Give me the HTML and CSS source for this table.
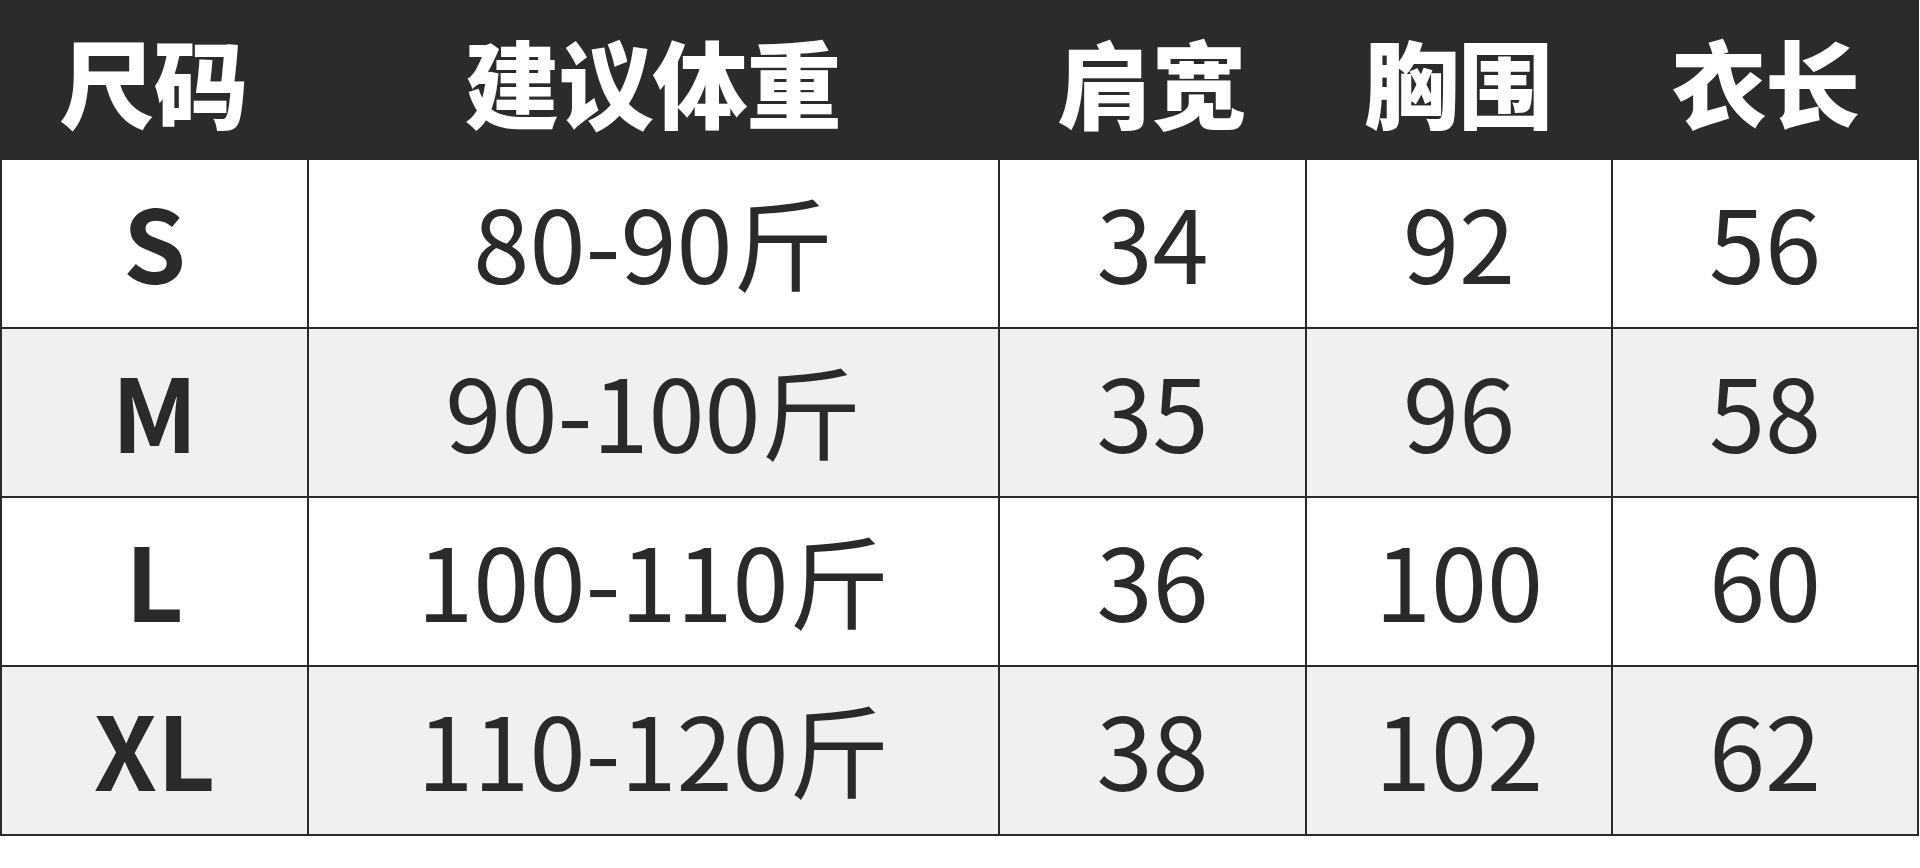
FILE: index.html
```html
<!DOCTYPE html>
<html lang="zh-CN">
<head>
<meta charset="utf-8">
<title>尺码表</title>
<link rel="stylesheet" href="styles.css">
</head>
<body>
<div class="sheet">
  <div class="hd">尺码</div>
  <div class="hd">建议体重</div>
  <div class="hd">肩宽</div>
  <div class="hd">胸围</div>
  <div class="hd">衣长</div>

  <div class="cell size first">S</div>
  <div class="cell">80-90斤</div>
  <div class="cell">34</div>
  <div class="cell">92</div>
  <div class="cell last">56</div>

  <div class="cell size first alt">M</div>
  <div class="cell alt">90-100斤</div>
  <div class="cell alt">35</div>
  <div class="cell alt">96</div>
  <div class="cell last alt">58</div>

  <div class="cell size first">L</div>
  <div class="cell">100-110斤</div>
  <div class="cell">36</div>
  <div class="cell">100</div>
  <div class="cell last">60</div>

  <div class="cell size first alt">XL</div>
  <div class="cell alt">110-120斤</div>
  <div class="cell alt">38</div>
  <div class="cell alt">102</div>
  <div class="cell last alt">62</div>
</div>
</body>
</html>
```
FILE: styles.css
```css
html, body {
  margin: 0;
  padding: 0;
  background: #ffffff;
}

.sheet {
  display: grid;
  grid-template-columns: 307px 691px 307px 306px 308px;
  grid-template-rows: 160px repeat(4, 169px);
  width: 1919px;
  font-family: "Noto Sans CJK SC", "Noto Sans", sans-serif;
  color: #2a2a2a;
}

.hd {
  background: #2b2b2b;
  color: #ffffff;
  font-weight: 900;
  font-size: 95px;
  line-height: 1;
  display: flex;
  align-items: center;
  justify-content: center;
  padding-top: 1px;
  box-sizing: border-box;
  letter-spacing: -1px;
}

.cell {
  box-sizing: border-box;
  border-left: 2px solid #2a2a2a;
  border-bottom: 2px solid #2a2a2a;
  background: #ffffff;
  display: flex;
  align-items: center;
  justify-content: center;
  padding-bottom: 7px;
  font-size: 101px;
  font-weight: 400;
  line-height: 1;
}

.cell.alt {
  background: #f0f0f0;
}

.cell.last {
  border-right: 2px solid #2a2a2a;
}

.cell.size {
  font-weight: 700;
}
```
